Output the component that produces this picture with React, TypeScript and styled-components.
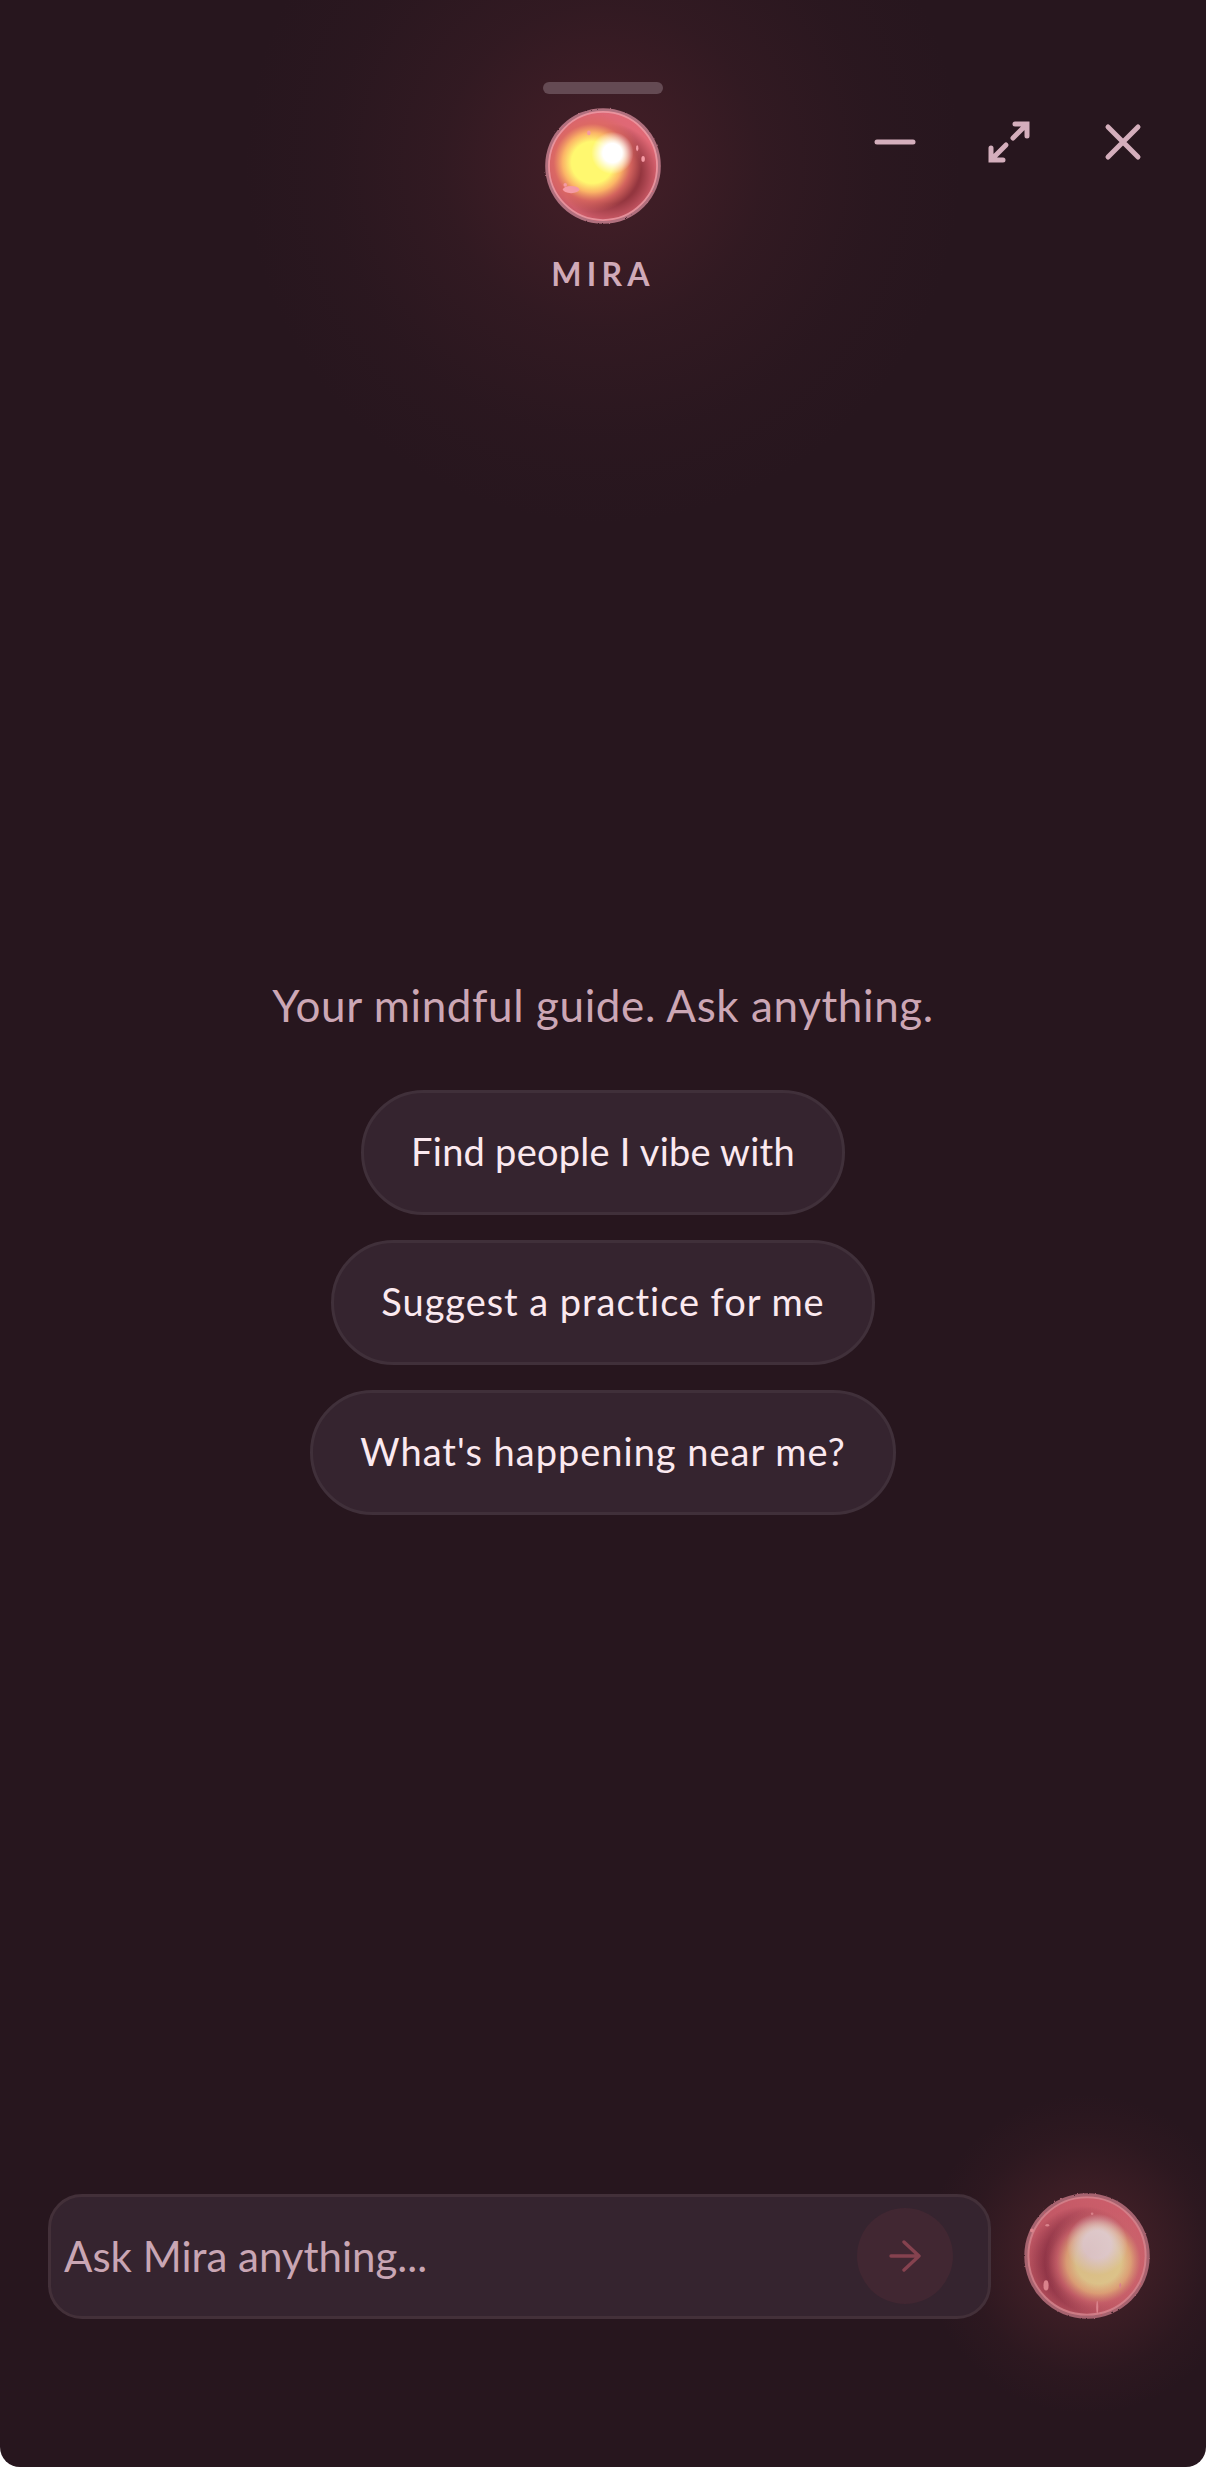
import styled, { createGlobalStyle } from "styled-components";

const GlobalStyle = createGlobalStyle`
  html, body {
    margin: 0;
    padding: 0;
    background: #ffffff;
  }
  * {
    box-sizing: border-box;
  }
`;

const Sheet = styled.div`
  position: relative;
  width: 1206px;
  height: 2467px;
  overflow: hidden;
  display: flex;
  flex-direction: column;
  background: #27161e;
  border-radius: 0 0 20px 20px;
  font-family: "Lato", "Noto Sans", sans-serif;
  font-variant-ligatures: none;
`;

const Header = styled.header`
  position: relative;
  height: 560px;
  display: flex;
  flex-direction: column;
  align-items: center;
  padding-top: 82px;
  background: radial-gradient(
    circle 360px at 603px 165px,
    rgba(130, 50, 60, 0.28) 0%,
    rgba(130, 50, 60, 0.25) 18%,
    rgba(120, 50, 60, 0.13) 45%,
    rgba(100, 45, 55, 0.05) 75%,
    rgba(100, 45, 55, 0) 100%
  );
`;

const Grabber = styled.div`
  width: 120px;
  height: 12px;
  border-radius: 6px;
  background: #644a53;
`;

const OrbSvg = styled.svg<{ $size: number }>`
  display: block;
  flex-shrink: 0;
  width: ${(p) => p.$size}px;
  height: ${(p) => p.$size}px;
`;

const HeaderOrb = styled.div`
  margin-top: 13px;
`;

const Name = styled.div`
  margin-top: 29px;
  font-size: 32px;
  line-height: 40px;
  font-weight: 700;
  letter-spacing: 5.2px;
  color: #d0aab8;
`;

const WindowControls = styled.div`
  position: absolute;
  top: 121px;
  right: 62px;
  display: flex;
  align-items: center;
  gap: 72px;
`;

const ControlIcon = styled.svg`
  display: block;
  width: 42px;
  height: 42px;
  fill: none;
  stroke: #d4aebc;
  stroke-width: 5;
  stroke-linecap: round;
  stroke-linejoin: miter;
`;

const Welcome = styled.main`
  flex: 1;
  display: flex;
  flex-direction: column;
  align-items: center;
  padding-top: 420px;
`;

const Tagline = styled.p`
  margin: 0 0 60px;
  font-size: 44px;
  line-height: 50px;
  font-weight: 400;
  letter-spacing: 0.6px;
  color: #cca7b5;
`;

const Suggestions = styled.div`
  display: flex;
  flex-direction: column;
  align-items: center;
  gap: 25px;
`;

const Chip = styled.button<{ $tracking: number }>`
  height: 125px;
  padding: 0 47px 3px;
  border-radius: 63px;
  border: 3px solid #40303a;
  background: #35242f;
  font-family: inherit;
  font-size: 38px;
  font-weight: 400;
  letter-spacing: ${(p) => p.$tracking}px;
  color: #fbe9ef;
`;

const Composer = styled.footer`
  position: relative;
  display: flex;
  align-items: center;
  gap: 32px;
  padding: 0 55px 147px 48px;
  &::before {
    content: "";
    position: absolute;
    left: 886px;
    top: -100px;
    width: 320px;
    height: 320px;
    background: radial-gradient(
      circle 160px at 200px 162px,
      rgba(140, 60, 65, 0.32) 0%,
      rgba(130, 55, 60, 0.22) 42%,
      rgba(120, 50, 55, 0.07) 75%,
      rgba(110, 50, 55, 0) 100%
    );
  }
`;

const InputBar = styled.div`
  position: relative;
  flex: 1;
  height: 125px;
  display: flex;
  align-items: center;
  justify-content: space-between;
  padding: 0 35px 0 13px;
  border-radius: 34px;
  border: 3px solid #433039;
  background: #35242f;
`;

const Placeholder = styled.span`
  font-size: 42px;
  color: #c9a6b4;
`;

const SendButton = styled.button`
  width: 96px;
  height: 96px;
  padding: 0;
  display: flex;
  align-items: center;
  justify-content: center;
  border: none;
  border-radius: 50%;
  background: #412732;
`;

const SendIcon = styled.svg`
  width: 32px;
  height: 32px;
  fill: none;
  stroke: #85424f;
  stroke-width: 3.4;
  stroke-linecap: round;
  stroke-linejoin: round;
`;

const chips = [
  { label: "Find people I vibe with", tracking: 0.25 },
  { label: "Suggest a practice for me", tracking: 0.95 },
  { label: "What's happening near me?", tracking: 1 },
];

type OrbLook = {
  id: string;
  size: number;
  rim: [string, string];
  shade: { x: number; y: number; r: number; color: string };
  core: { x: number; y: number; r: number; inner: string; mid: string; edge: string };
  hot: { x: number; y: number; r: number };
  sparks: [number, number, number, number][];
};

const headerOrb: OrbLook = {
  id: "orb-small",
  size: 118,
  rim: ["#c75765", "#e66c79"],
  shade: { x: 56, y: 56, r: 42, color: "#94363f" },
  core: { x: 41, y: 47, r: 42, inner: "#fff86f", mid: "#fbb466", edge: "#dd6a62" },
  hot: { x: 58, y: 39, r: 18 },
  sparks: [
    [23, 70, 7, 3],
    [18, 66, 1.5, 1.5],
    [79, 35, 1, 2.5],
    [84, 44, 1.5, 2.5],
    [38, 22, 1.5, 2],
  ],
};

const launcherOrb: OrbLook = {
  id: "orb-large",
  size: 128,
  rim: ["#c45a68", "#e86c7c"],
  shade: { x: 47, y: 55, r: 44, color: "#8a2c44" },
  core: { x: 59, y: 54, r: 42, inner: "#fbf4a4", mid: "#f8c088", edge: "#e0707a" },
  hot: { x: 58, y: 41, r: 24 },
  sparks: [
    [18, 73, 2, 4],
    [58, 90, 0.8, 5],
    [76, 73, 0.8, 2],
    [7, 30, 1.5, 1.5],
    [19, 26, 1.5, 1],
    [54, 17, 1, 1],
  ],
};

// glass ball with a hot core, drawn rather than built from css layers
function Orb({ look }: { look: OrbLook }) {
  const { id, shade, core, hot } = look;
  return (
    <OrbSvg $size={look.size} viewBox="0 0 100 100">
      <defs>
        <linearGradient id={`${id}-rim`} x1="0" y1="1" x2="1" y2="0">
          <stop offset="0%" stopColor={look.rim[0]} />
          <stop offset="100%" stopColor={look.rim[1]} />
        </linearGradient>
        <radialGradient id={`${id}-shade`}>
          <stop offset="0%" stopColor={shade.color} />
          <stop offset="62%" stopColor={shade.color} />
          <stop offset="100%" stopColor={shade.color} stopOpacity="0" />
        </radialGradient>
        <radialGradient id={`${id}-core`}>
          <stop offset="0%" stopColor={core.inner} />
          <stop offset="42%" stopColor={core.inner} />
          <stop offset="60%" stopColor={core.mid} />
          <stop offset="78%" stopColor={core.edge} stopOpacity="0.85" />
          <stop offset="100%" stopColor={core.edge} stopOpacity="0" />
        </radialGradient>
        <radialGradient id={`${id}-hot`}>
          <stop offset="0%" stopColor="#ffffff" />
          <stop offset="45%" stopColor="#ffffff" />
          <stop offset="100%" stopColor="#ffffff" stopOpacity="0" />
        </radialGradient>
        <filter id={`${id}-rough`} x="-10%" y="-10%" width="120%" height="120%">
          <feTurbulence type="fractalNoise" baseFrequency="0.45" numOctaves="2" seed="4" />
          <feDisplacementMap in="SourceGraphic" scale="1.6" />
        </filter>
        <filter id={`${id}-soft`}>
          <feGaussianBlur stdDeviation="0.5" />
        </filter>
        <clipPath id={`${id}-clip`}>
          <circle cx="50" cy="50" r="46" />
        </clipPath>
      </defs>
      <g filter={`url(#${id}-rough)`}>
        <circle cx="50" cy="50" r="49" fill="#b0707e" />
        <circle cx="50" cy="50" r="46.5" fill={`url(#${id}-rim)`} />
      </g>
      <g clipPath={`url(#${id}-clip)`}>
        <circle cx={shade.x} cy={shade.y} r={shade.r} fill={`url(#${id}-shade)`} />
        <circle cx={core.x} cy={core.y} r={core.r} fill={`url(#${id}-core)`} />
        <circle cx={hot.x} cy={hot.y} r={hot.r} fill={`url(#${id}-hot)`} />
      </g>
      <circle
        cx="50"
        cy="50"
        r="45.8"
        fill="none"
        stroke="#ec9fa9"
        strokeWidth="1.5"
        strokeOpacity="0.8"
      />
      <g filter={`url(#${id}-soft)`} fill="#f59aa4">
        {look.sparks.map(([cx, cy, rx, ry]) => (
          <ellipse key={`${cx}-${cy}`} cx={cx} cy={cy} rx={rx} ry={ry} />
        ))}
      </g>
    </OrbSvg>
  );
}

function App() {
  return (
    <Sheet>
      <GlobalStyle />
      <Header>
        <Grabber />
        <HeaderOrb>
          <Orb look={headerOrb} />
        </HeaderOrb>
        <Name>MIRA</Name>
        <WindowControls>
          <ControlIcon viewBox="0 0 42 42">
            <path d="M3 21H39" />
          </ControlIcon>
          <ControlIcon viewBox="0 0 42 42">
            <path d="M25 17L38 4M27 3H39V15" />
            <path d="M18 24L4 38M3 27V39H15" />
          </ControlIcon>
          <ControlIcon viewBox="0 0 42 42">
            <path d="M6 6L36 36M36 6L6 36" />
          </ControlIcon>
        </WindowControls>
      </Header>
      <Welcome>
        <Tagline>Your mindful guide. Ask anything.</Tagline>
        <Suggestions>
          {chips.map((chip) => (
            <Chip key={chip.label} $tracking={chip.tracking}>
              {chip.label}
            </Chip>
          ))}
        </Suggestions>
      </Welcome>
      <Composer>
        <InputBar>
          <Placeholder>Ask Mira anything...</Placeholder>
          <SendButton>
            <SendIcon viewBox="0 0 32 32">
              <path d="M2 16H30M15 2L30 16L15 30" />
            </SendIcon>
          </SendButton>
        </InputBar>
        <Orb look={launcherOrb} />
      </Composer>
    </Sheet>
  );
}

export default App;
